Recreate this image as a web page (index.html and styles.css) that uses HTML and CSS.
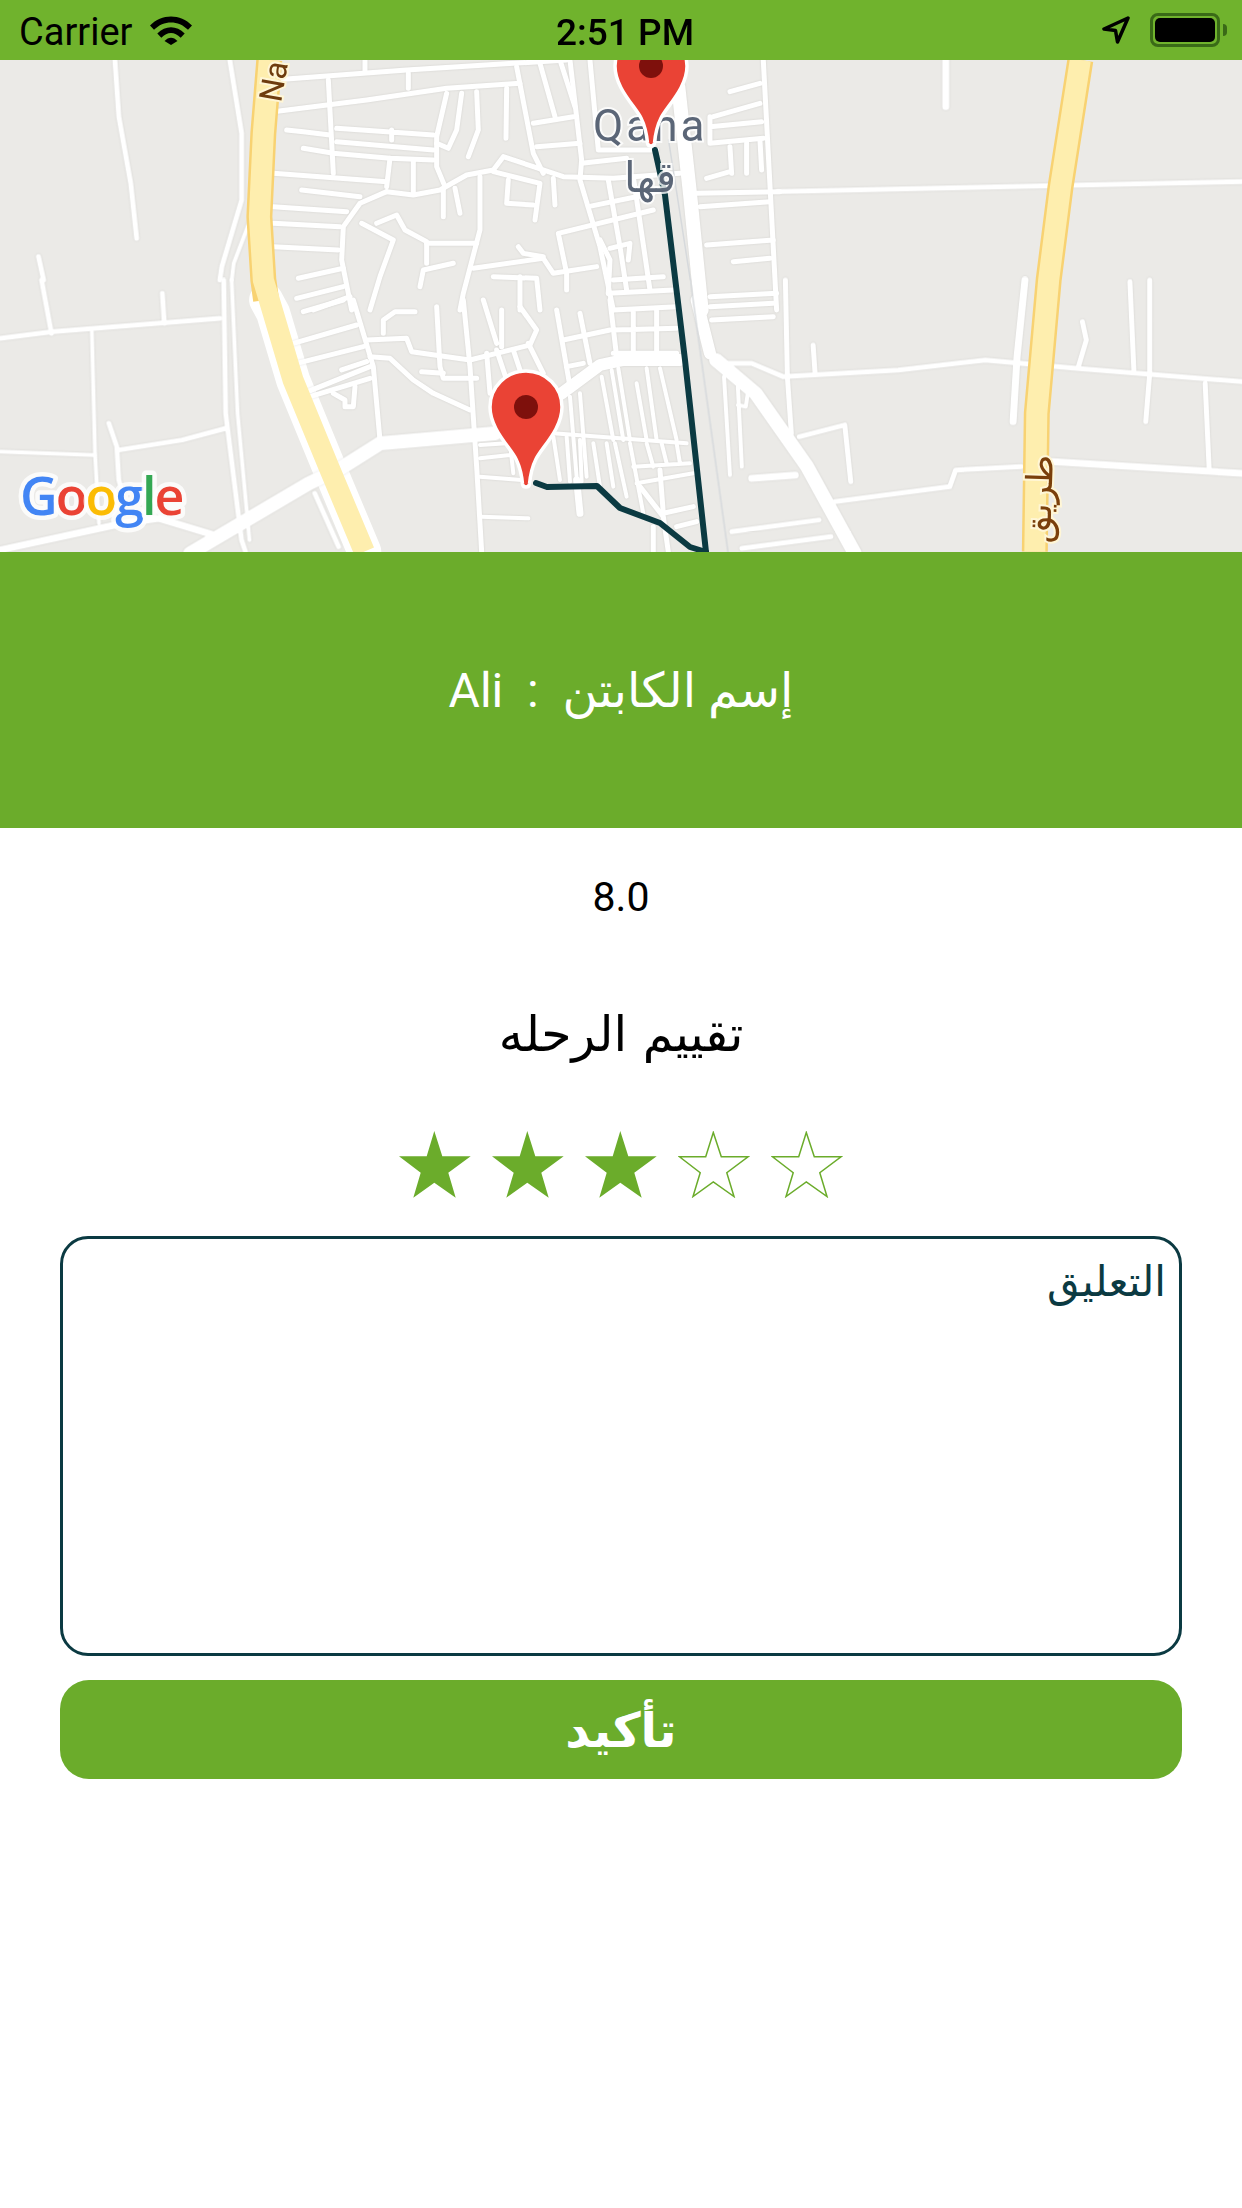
FILE: index.html
```html
<!DOCTYPE html>
<html lang="ar">
<head>
<meta charset="utf-8">
<title>Trip rating</title>
<link rel="stylesheet" href="styles.css">
</head>
<body>
<div class="screen">
  <header class="status">
    <div class="status-left">
      <span class="carrier">Carrier</span>
      <svg class="wifi" viewBox="0 0 42 30"><path d="M0 10.500C11.500-1.500 30.500-1.500 42 10.500L38 14.800C28.500 5 13.500 5 4 14.800Z"/><path d="M7.300 18.500C15.500 10 26.500 10 34.700 18.500L30.700 22.800C24.500 16.500 17.500 16.500 11.300 22.800Z"/><path d="M14.500 26C18.500 21.500 23.500 21.500 27.500 26L21 30 Z"/></svg>
    </div>
    <span class="time">2:51 PM</span>
    <div class="status-right">
      <svg class="arrow" viewBox="0 0 28 28"><path d="M26 2 2 13 13.500 14.500 15.500 26Z"/></svg>
      <div class="battery"><div class="battery-fill"></div></div>
      <div class="battery-nub"></div>
    </div>
  </header>

  <svg class="map" viewBox="0 60 1242 492">
    <rect x="0" y="60" width="1242" height="492" fill="#ebeae7"/>

    <g class="casing" transform="scale(.396 .3333)">
      <path d="M672 900 690 940 740 1140 830 1400 920 1655"/>
    </g>

    <g class="roads">
      <g transform="scale(.396 .3333)" class="w4">
        <path d="M290 180 300 350 330 550 345 715"/>
        <path d="M97 770 110 840"/>
        <path d="M580 180 610 400 610 600 560 800 555 840"/>
        <path d="M635 650 590 790 585 840" class="w3"/>
      </g>
      <g transform="translate(0 280) scale(.396 .3333)" class="w4">
        <path d="M105 0 130 160"/>
        <path d="M0 175 135 155 555 115"/>
        <path d="M410 40 415 130"/>
        <path d="M232 155 240 520 250 730" class="w3"/>
        <path d="M0 515 240 525" class="w3"/>
        <path d="M275 430 295 500 300 600 310 640"/>
        <path d="M300 510 460 480 570 445"/>
        <path d="M0 810 310 730 400 715 540 765" class="w5"/>
        <path d="M565 0 570 400 610 780 620 815"/>
        <path d="M585 0 600 400 630 780" class="w3"/>
        <path d="M795 640 855 800"/>
        <path d="M480 820 780 610 860 565 960 490 1250 460" class="w12"/>
      </g>

      <g transform="translate(280 60) scale(.3333)" class="w4">
        <path d="M-20 60 380 30 700 10 860 0"/>
        <path d="M-20 155 260 120 500 85 720 70"/>
        <path d="M145 60 160 340"/>
        <path d="M255 0 255 35M385 40 385 85"/>
        <path d="M20 210 70 215 150 225"/>
        <path d="M170 205 460 225M170 245 460 270M335 210 335 240"/>
        <path d="M70 265 160 280 330 295 460 300"/>
        <path d="M-20 340 320 365"/>
        <path d="M330 295 320 380M400 300 400 395"/>
        <path d="M320 395 400 405 480 390 560 345 640 330 670 290 760 320 850 350 1000 355 1200 340"/>
        <path d="M500 100 470 230 470 320 495 380"/>
        <path d="M545 100 530 210 505 265 470 250"/>
        <path d="M590 95 595 210 565 290"/>
        <path d="M680 85 678 235"/>
        <path d="M710 20 760 280 790 340"/>
        <path d="M780 10 825 170M840 0 885 140"/>
        <path d="M760 190 880 170M770 260 900 250"/>
        <path d="M870 0 905 300 900 360 960 560 1000 750"/>
        <path d="M930 0 955 270 1130 270"/>
        <path d="M905 310 1040 295"/>
        <path d="M640 335 780 370 765 480M685 360 680 430 760 435M820 355 825 435"/>
        <path d="M490 390 490 470M525 385 540 460"/>
        <path d="M320 395 240 430 190 500 185 600 215 750"/>
        <path d="M65 390 240 410M-20 440 200 455M-20 490 180 500M-20 560 175 570"/>
        <path d="M600 350 600 510 550 700 540 750"/>
        <path d="M245 490 340 540 300 650 270 750"/>
        <path d="M290 490 350 465 375 510 440 545 440 610"/>
        <path d="M440 550 590 550"/>
        <path d="M420 680 430 630 520 610M580 625 790 595 820 640 950 620"/>
        <path d="M715 560 730 580 790 590"/>
        <path d="M55 655 190 625M50 715 190 680M100 750 210 710"/>
        <path d="M1120 450 835 520 860 640 860 690"/>
        <path d="M925 440 1120 400"/>
        <path d="M985 360 1020 560 1040 690M1060 350 1110 690"/>
        <path d="M960 540 990 600 985 700"/>
        <path d="M990 565 1050 550 1045 600"/>
        <path d="M640 650 770 655 780 750M720 650 720 750"/>
        <path d="M1000 660 1150 650M985 700 1180 690"/>
        <path d="M1195 80 1230 400 1265 750" class="w12"/>
        <path d="M1180 50 1190 0" class="w8"/>
        <path d="M1350 95 1440 70M1300 170 1440 130M1290 200 1445 185M1290 250 1450 235M1290 170 1290 250"/>
        <path d="M1280 355 1350 335M1350 260 1355 340M1400 250 1400 340M1440 240 1445 330"/>
        <path d="M1250 400 1500 395M1260 440 1470 425M1360 605 1470 595M1280 555 1480 540M1290 710 1490 700"/>
        <path d="M1450 0 1490 750"/>
      </g>

      <g transform="translate(280 300) scale(.3333)" class="w4">
        <path d="M845 280 960 195 1030 180 1200 180" class="w11"/>
        <path d="M220 0 280 200 300 420"/>
        <path d="M40 130 230 75M50 190 250 140M70 280 270 200M90 290 270 235"/>
        <path d="M70 35 190 0"/>
        <path d="M185 210 260 185"/>
        <path d="M160 280 195 300 195 320 220 320 225 260"/>
        <path d="M260 120 380 115 395 155 570 180 750 135 770 90 720 20"/>
        <path d="M310 100 310 60 345 35 405 35"/>
        <path d="M270 170 330 175 400 240 460 280 570 330"/>
        <path d="M470 20 480 200 490 235 590 235"/>
        <path d="M425 215 490 220"/>
        <path d="M550 0 570 200 590 500 605 755"/>
        <path d="M610 0 650 130M665 30 665 140M620 160 630 280M650 150 680 240"/>
        <path d="M700 150 720 210M745 130 790 220"/>
        <path d="M830 30 870 260M900 40 930 190"/>
        <path d="M850 120 990 90M860 200 910 190"/>
        <path d="M990 0 1010 170M1000 30 1190 20M1000 90 1190 85M1060 30 1060 170M1130 30 1130 165M1000 160 1190 160"/>
        <g class="w3">
          <path d="M870 290 890 530M900 280 920 530M965 230 1000 420M995 210 1030 420M1015 205 1050 420M1070 250 1100 420M1100 205 1130 420M1140 205 1190 420"/>
          <path d="M820 400 1220 430"/>
          <path d="M820 410 840 540M860 410 870 545M900 420 905 545M940 430 960 560M980 430 1000 560M1005 430 1040 590M1050 430 1090 640"/>
          <path d="M1100 430 1120 500M1145 430 1160 490M1190 430 1200 490M1060 500 1230 490M1070 550 1240 520"/>
          <path d="M600 435 680 430M600 475 690 465M600 530 725 540M690 430 700 520"/>
          <path d="M605 650 745 655"/>
        </g>
        <path d="M890 540 900 640" class="w5"/>
        <path d="M1120 680 1120 755M1080 560 1150 650 1165 755M1150 640 1240 620M1190 680 1250 665"/>
        <path d="M1140 510 1150 640"/>
        <path d="M1250 0 1290 160" class="w11"/>
        <path d="M1290 20 1480 10M1295 60 1480 50"/>
      </g>

      <g transform="translate(621 0) scale(.396 .3333)" class="w4">
        <path d="M395 575 1568 545"/>
        <path d="M820 180 820 320" class="w5"/>
      </g>

      <g transform="translate(621 280) scale(.396 .3333)" class="w4">
        <path d="M240 240 340 340 470 560 590 820" class="w12"/>
        <path d="M415 0 420 290 430 460"/>
        <path d="M250 250 330 250 410 290 700 270 920 240 1150 265 1568 305"/>
        <path d="M485 195 490 280M1165 125 1175 180 1155 260M1285 5 1295 270M1335 0 1335 280 1325 425M1475 310 1485 565"/>
        <path d="M1020 0 1000 230 990 425" class="w5"/>
        <path d="M450 470 565 435 580 605"/>
        <path d="M330 595 440 585" class="w5"/>
        <path d="M540 665 830 620 845 570 1010 560"/>
        <path d="M1090 545 1568 580" class="w5"/>
        <path d="M280 755 500 720M305 805 530 770"/>
        <path d="M260 290 275 585M295 320 305 560M320 340 315 380 295 375" class="w3"/>
      </g>
    </g>

    <g transform="translate(621 280) scale(.396 .3333)" class="rail"><path d="M175 0 270 815"/></g>
    <g transform="translate(621 0) scale(.396 .3333)" class="rail"><path d="M120 420 175 840"/></g>

    <g transform="scale(.396 .3333)">
      <path class="mw-edge" d="M680 180 665 400 655 650 665 840 672 900"/>
      <path class="mw-core" d="M680 180 665 400 655 650 665 840 690 940 740 1140 830 1400 920 1655"/>
    </g>
    <g transform="translate(621 0) scale(.396 .3333)">
      <path class="mw-edge" d="M1160 180 1110 560 1080 840 1050 1240 1045 1655"/>
      <path class="mw-core" d="M1160 180 1110 560 1080 840 1050 1240 1045 1655"/>
    </g>

    <g class="route">
      <path d="M655 150 665 195 685 360 706 552"/>
      <path d="M536 483 547 487 597 486 620 508 660 523 690 547 706 552"/>
    </g>

    <text class="road-label" transform="translate(281 103) rotate(-80)">Na</text>
    <text class="road-label-ar" transform="translate(1053 455) rotate(-88)">طريق ق</text>
    <text class="city" x="593" y="141">Qana</text>
    <text class="city-ar" x="650" y="192">قها</text>

    <text class="google" x="20" y="515"><tspan fill="#4285f4">G</tspan><tspan fill="#ea4335">o</tspan><tspan fill="#fbbc05">o</tspan><tspan fill="#4285f4">g</tspan><tspan fill="#34a853">l</tspan><tspan fill="#ea4335">e</tspan></text>

    <g transform="translate(651 146)">
      <path class="pin" d="M-3.500-3C-4.500-14-6-20-10-28C-16-40-36-58-36-80A36 36 0 0 1 36-80C36-58 16-40 10-28C6-20 4.500-14 3.500-3C3 1-3 1-3.500-3Z"/>
      <circle class="pin-dot" cx="0" cy="-80" r="12"/>
    </g>
    <g transform="translate(526 487)">
      <path class="pin" d="M-3.500-3C-4.500-14-6-20-10-28C-16-40-36-58-36-80A36 36 0 0 1 36-80C36-58 16-40 10-28C6-20 4.500-14 3.500-3C3 1-3 1-3.500-3Z"/>
      <circle class="pin-dot" cx="0" cy="-80" r="12"/>
    </g>
  </svg>

  <section class="captain"><span dir="rtl">إسم الكابتن  :  Ali</span></section>

  <div class="score">8.0</div>
  <h2 class="rate-title">تقييم الرحله</h2>

  <div class="stars">
    <svg class="star" viewBox="0 0 72 67"><polygon class="on" points="35.300,0 43.300,25.300 71.700,25.300 49.300,41.700 56.700,66.700 35.300,51.700 14.300,66.700 21.700,41.700 0,25.300 27.700,25.300"/></svg>
    <svg class="star" viewBox="0 0 72 67"><polygon class="on" points="35.300,0 43.300,25.300 71.700,25.300 49.300,41.700 56.700,66.700 35.300,51.700 14.300,66.700 21.700,41.700 0,25.300 27.700,25.300"/></svg>
    <svg class="star" viewBox="0 0 72 67"><polygon class="on" points="35.300,0 43.300,25.300 71.700,25.300 49.300,41.700 56.700,66.700 35.300,51.700 14.300,66.700 21.700,41.700 0,25.300 27.700,25.300"/></svg>
    <svg class="star" viewBox="0 0 72 67"><polygon class="off" points="35.300,1.500 43.300,25.800 70,25.800 48.800,41.700 56,65.500 35.300,51 15,65.500 22.200,41.700 1.500,25.800 27.700,25.800"/></svg>
    <svg class="star" viewBox="0 0 72 67"><polygon class="off" points="35.300,1.500 43.300,25.800 70,25.800 48.800,41.700 56,65.500 35.300,51 15,65.500 22.200,41.700 1.500,25.800 27.700,25.800"/></svg>
  </div>

  <div class="comment" dir="rtl">التعليق</div>
  <button class="confirm" type="button">تأكيد</button>
</div>
</body>
</html>
```

FILE: styles.css
```css
* { box-sizing: border-box; }
html, body { margin: 0; padding: 0; background: #fff; }
.screen {
  width: 1242px;
  height: 2208px;
  overflow: hidden;
  display: flex;
  flex-direction: column;
  font-family: Roboto, "DejaVu Sans", sans-serif;
  color: #000;
}

/* status bar */
.status {
  height: 60px;
  background: #70b32d;
  position: relative;
  display: flex;
  align-items: center;
  justify-content: space-between;
  padding: 0 15px 0 19px;
  flex: none;
}
.status-left, .status-right { display: flex; align-items: center; }
.carrier { font-size: 38px; line-height: 60px; padding-top: 3px; }
.wifi { width: 42px; height: 30px; margin-left: 18px; fill: #000; }
.time {
  position: absolute;
  left: 556px;
  top: 3px;
  font-size: 37px;
  font-weight: 500;
  line-height: 60px;
  white-space: nowrap;
}
.arrow { width: 28px; height: 28px; fill: none; stroke: #000; stroke-width: 3.500; stroke-linejoin: round; margin-right: 20px; }
.battery {
  width: 70px;
  height: 34px;
  border: 3px solid #3a6a17;
  border-radius: 8px;
  padding: 2px;
}
.battery-fill { width: 100%; height: 100%; background: #000; border-radius: 5px; }
.battery-nub { width: 4px; height: 12px; margin-left: 3px; background: #3a6a17; border-radius: 0 4px 4px 0; }

/* map */
.map { width: 1242px; height: 492px; display: block; flex: none; }
.map path { fill: none; vector-effect: non-scaling-stroke; stroke-linecap: round; stroke-linejoin: round; }
.roads { stroke: #fff; filter: drop-shadow(0 0 1px rgba(0, 0, 0, .1)); }
.w3 { stroke-width: 4px; }
.w4 { stroke-width: 5px; }
.w5 { stroke-width: 7px; }
.w8 { stroke-width: 9px; }
.w11 { stroke-width: 12px; }
.w12 { stroke-width: 14px; }
.casing { stroke: #fff; stroke-width: 34px; }
.rail { stroke: #d6d9dc; stroke-width: 1.500px; }
.map .mw-edge { stroke: #f8d272; stroke-width: 26px; stroke-linecap: butt; }
.map .mw-core { stroke: #feeeae; stroke-width: 21px; stroke-linecap: butt; }
.route { stroke: #0b3a42; stroke-width: 6px; }
.road-label { font: 32px Roboto, sans-serif; fill: #6e3c0e; stroke: #fff6d6; stroke-width: 4px; paint-order: stroke; }
.road-label-ar { font: 36px "DejaVu Sans", sans-serif; fill: #7a3f0b; stroke: #fff6d6; stroke-width: 4px; paint-order: stroke; text-anchor: end; }
.city { font: 44px Roboto, sans-serif; letter-spacing: 3px; fill: #5b6677; stroke: rgba(255, 255, 255, .8); stroke-width: 4px; paint-order: stroke; }
.city-ar { font: 42px "DejaVu Sans", sans-serif; fill: #5b6677; stroke: rgba(255, 255, 255, .8); stroke-width: 4px; paint-order: stroke; text-anchor: middle; }
.google { font: 600 52px "Open Sans", sans-serif; letter-spacing: -2px; stroke: rgba(255, 255, 255, .8); stroke-width: 9px; paint-order: stroke; stroke-linejoin: round; }
.map .pin { fill: #ea4335; stroke: #fff; stroke-width: 3.500px; }
.pin-dot { fill: #7e100c; }

/* captain */
.captain {
  height: 276px;
  flex: none;
  background: #6bac2b;
  color: #fff;
  display: flex;
  align-items: center;
  justify-content: center;
  font-size: 48px;
  font-family: Roboto, "DejaVu Sans", sans-serif;
  white-space: pre;
}

/* rating */
.score {
  height: 138px;
  flex: none;
  display: flex;
  align-items: center;
  justify-content: center;
  font-size: 41px;
}
.rate-title {
  height: 136px;
  flex: none;
  margin: 0;
  display: flex;
  align-items: center;
  justify-content: center;
  font-size: 49px;
  font-weight: 400;
  font-family: "DejaVu Sans", sans-serif;
}
.stars {
  flex: none;
  display: flex;
  justify-content: center;
  gap: 21px;
  margin-top: 29px;
}
.star { width: 72px; height: 67px; display: block; }
.on { fill: #6bac2b; }
.off { fill: none; stroke: #6bac2b; stroke-width: 1.500; }

.comment {
  flex: none;
  width: 1122px;
  height: 420px;
  margin: 38px 0 0 60px;
  border: 3px solid #0b3a42;
  border-radius: 28px;
  padding: 18px 13px;
  font-family: "DejaVu Sans", sans-serif;
  font-size: 42px;
  color: #0b3a42;
}
.confirm {
  flex: none;
  width: 1122px;
  height: 99px;
  margin: 24px 0 0 60px;
  border: 0;
  border-radius: 29px;
  background: #6bac2b;
  color: #fff;
  font-family: "DejaVu Sans", sans-serif;
  font-weight: 700;
  font-size: 48px;
}
```
